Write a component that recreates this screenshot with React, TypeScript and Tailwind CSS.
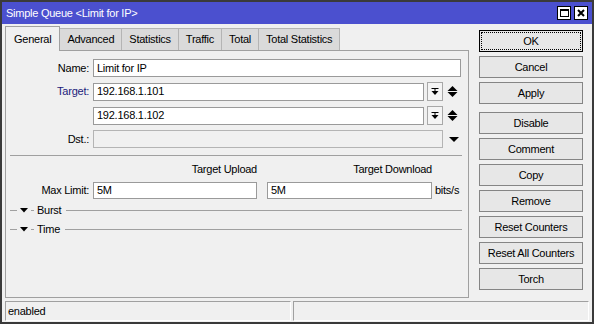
import React from 'react';

const tabs = ['General', 'Advanced', 'Statistics', 'Traffic', 'Total', 'Total Statistics'];

const buttons = [
  { label: 'OK', gap: false },
  { label: 'Cancel', gap: false },
  { label: 'Apply', gap: false },
  { label: 'Disable', gap: true },
  { label: 'Comment', gap: false },
  { label: 'Copy', gap: false },
  { label: 'Remove', gap: false },
  { label: 'Reset Counters', gap: false },
  { label: 'Reset All Counters', gap: false },
  { label: 'Torch', gap: false },
];

function UpDown() {
  return (
    <svg width="11" height="13" viewBox="0 0 11 13" className="shrink-0">
      <polygon points="0.5,6 5.5,1 10.5,6" fill="#000" />
      <polygon points="0.5,7 10.5,7 5.5,12" fill="#000" />
    </svg>
  );
}

function DownArrow() {
  return (
    <svg width="10" height="5" viewBox="0 0 10 5" className="shrink-0">
      <polygon points="0,0 10,0 5,5" fill="#000" />
    </svg>
  );
}

function DropBox() {
  return (
    <div className="w-[16px] h-[19px] shrink-0 border border-[#a8a8a8] bg-[#f4f4f4] flex items-center justify-center">
      <svg width="8" height="8" viewBox="0 0 8 8">
        <rect x="0.5" y="0" width="7" height="1" fill="#000" />
        <rect x="3.5" y="1" width="1" height="3" fill="#000" />
        <polygon points="0.5,3 7.5,3 4,7" fill="#000" />
      </svg>
    </div>
  );
}

function Field({ value, className, short }: { value: string; className: string; short?: boolean }) {
  return (
    <div
      className={`${short ? 'h-[17px]' : 'h-[18px]'} border border-[#9a9a9a] bg-white flex items-center pl-[3px] text-black ${className}`}
    >
      {value}
    </div>
  );
}

function Collapsed({ label }: { label: string }) {
  return (
    <div className="h-[16px] flex items-center ml-[4px] mr-[6px]">
      <div className="w-[7px] h-px bg-[#a0a0a0]" />
      <svg width="8" height="5" viewBox="0 0 8 5" className="mx-[3px]">
        <polygon points="0,0 8,0 4,4.5" fill="#000" />
      </svg>
      <div className="w-[3px] h-px bg-[#a0a0a0]" />
      <span className="ml-[3px] text-black">{label}</span>
      <div className="flex-1 h-px bg-[#a0a0a0] ml-[5px]" />
    </div>
  );
}

export default function App() {
  return (
    <div className="w-[594px] h-[324px] bg-[#f0f0f0] border-2 border-[#3a3a3a] flex flex-col overflow-hidden font-['Liberation_Sans',Arial,sans-serif] text-[11px] tracking-[-0.25px] leading-none select-none">
      {/* Title bar */}
      <div className="h-[22px] shrink-0 bg-[#4b50cf] flex items-center pl-[4px] pr-[4px]">
        <span className="text-white text-[11px]">Simple Queue &lt;Limit for IP&gt;</span>
        <div className="ml-auto flex gap-[3px]">
          <div className="w-[14px] h-[14px] bg-white border border-black flex items-center justify-center">
            <div className="w-[9px] h-[8px] border border-black border-t-2" />
          </div>
          <div className="w-[14px] h-[14px] bg-white border border-black flex items-center justify-center">
            <svg width="8" height="8" viewBox="0 0 8 8">
              <path d="M1 1 L7 7 M7 1 L1 7" stroke="#000" strokeWidth="2" />
            </svg>
          </div>
        </div>
      </div>

      <div className="flex flex-1 min-h-0">
        {/* Left: tabs and panel */}
        <div className="pl-[3px] pt-[2px] flex flex-col">
          <div className="h-[24px] flex items-end">
            {tabs.map((t, i) =>
              i === 0 ? (
                <div
                  key={t}
                  className="h-[25px] -mb-px relative z-10 px-[8px] flex items-center bg-[#f0f0f0] border border-b-0 border-[#a0a0a0] text-black"
                >
                  {t}
                </div>
              ) : (
                <div
                  key={t}
                  className="h-[22px] px-[7px] flex items-center bg-[#dadada] border border-l-0 border-b-0 border-[#b4b4b4] text-black"
                >
                  {t}
                </div>
              )
            )}
          </div>
          <div className="w-[464px] h-[248px] border border-[#a0a0a0] pt-[8px] flex flex-col">
            <div className="flex flex-col gap-[5px]">
              <div className="flex items-center">
                <span className="w-[83px] text-right text-black">Name:</span>
                <Field value="Limit for IP" className="ml-[4px] w-[368px]" />
              </div>
              <div className="flex items-center">
                <span className="w-[83px] text-right text-[#1c1c7c]">Target:</span>
                <Field value="192.168.1.101" className="ml-[4px] w-[331px]" />
                <div className="ml-[3px]"><DropBox /></div>
                <div className="ml-[4px]"><UpDown /></div>
              </div>
              <div className="flex items-center">
                <span className="w-[83px]" />
                <Field value="192.168.1.102" className="ml-[4px] w-[331px]" />
                <div className="ml-[3px]"><DropBox /></div>
                <div className="ml-[4px]"><UpDown /></div>
              </div>
              <div className="flex items-center">
                <span className="w-[83px] text-right text-black">Dst.:</span>
                <div className="ml-[4px] w-[350px] h-[18px] border border-[#b4b4b4] bg-[#f0f0f0]" />
                <div className="ml-[6px]"><DownArrow /></div>
              </div>
            </div>

            <div className="mt-[7px] ml-[4px] mr-[6px] h-px bg-[#a0a0a0]" />

            <div className="mt-[6px] h-[15px] flex items-center text-black">
              <span className="w-[87px]" />
              <span className="w-[164px] text-right">Target Upload</span>
              <span className="ml-[10px] w-[165px] text-right">Target Download</span>
            </div>
            <div className="mt-[5px] flex items-center">
              <span className="w-[83px] text-right text-black">Max Limit:</span>
              <Field value="5M" short className="ml-[4px] w-[164px]" />
              <Field value="5M" short className="ml-[10px] w-[165px]" />
              <span className="ml-[3px] text-black">bits/s</span>
            </div>

            <div className="mt-[3px] flex flex-col gap-[3px]">
              <Collapsed label="Burst" />
              <Collapsed label="Time" />
            </div>
          </div>
        </div>

        {/* Right: buttons */}
        <div className="ml-[10px] pt-[6px] flex flex-col gap-[4px]">
          {buttons.map((b) => (
            <div
              key={b.label}
              className={`w-[104px] h-[22px] shrink-0 flex items-center justify-center text-black text-[11px] bg-[#e7e7e7] ${
                b.gap ? 'mt-[4px]' : ''
              } ${b.label === 'OK' ? 'border border-black' : 'border border-[#858585]'}`}
            >
              {b.label === 'OK' ? (
                <div className="w-[100px] h-[18px] border border-dotted border-black flex items-center justify-center">
                  OK
                </div>
              ) : (
                b.label
              )}
            </div>
          ))}
        </div>
      </div>

      {/* Status bar */}
      <div className="h-[20px] shrink-0 mt-[2px] mb-px flex gap-[2px] px-[3px]">
        <div className="w-[286px] h-full border border-[#a0a0a0] border-r-white border-b-white flex items-center pl-[2px] text-black">
          enabled
        </div>
        <div className="flex-1 h-full border border-[#a0a0a0] border-r-white border-b-white" />
      </div>
    </div>
  );
}
